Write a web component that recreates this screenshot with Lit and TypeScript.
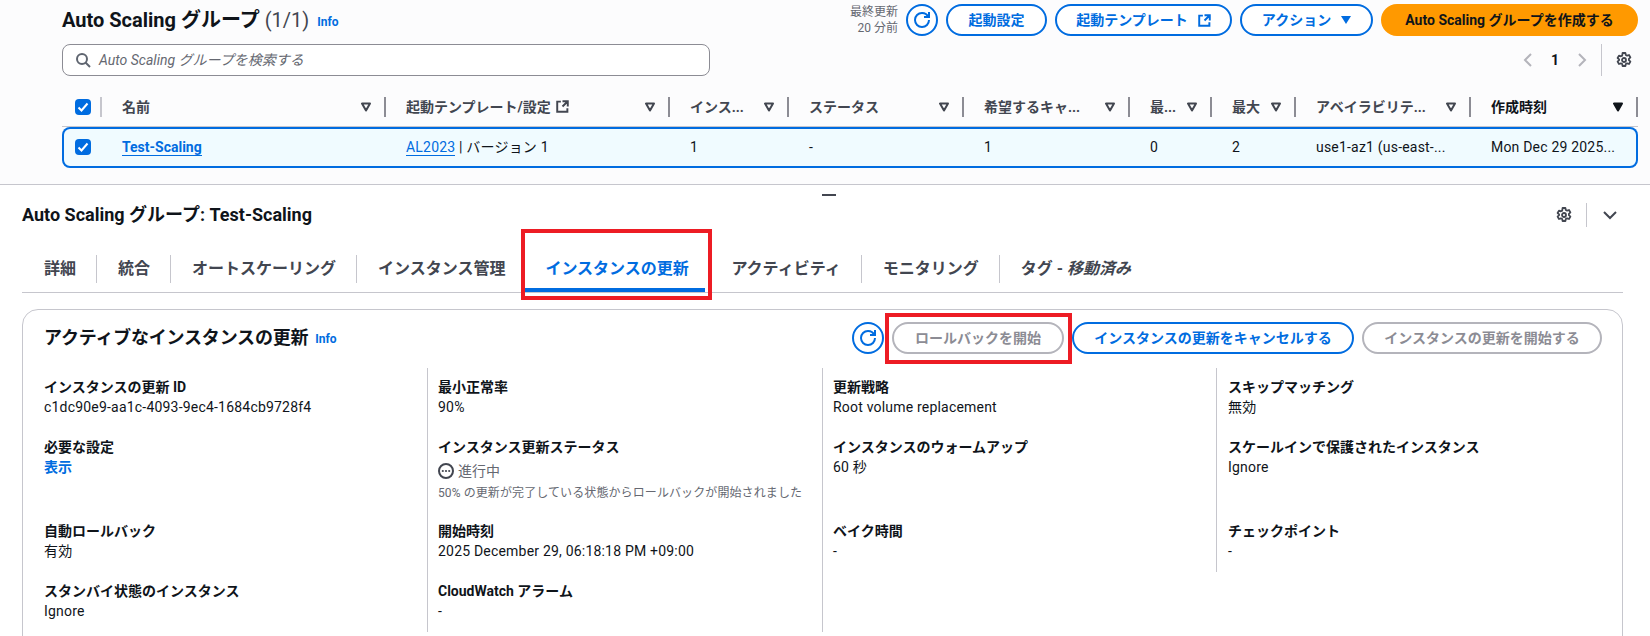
import { LitElement, html, css, svg } from "lit";
import { customElement } from "lit/decorators.js";

const icon = (body: unknown, size = 16, sw = 2) => html`<svg class="ic" width=${size} height=${size} viewBox="0 0 16 16" fill="none" stroke="currentColor" stroke-width=${sw}>${body}</svg>`;
const refresh = () => icon(svg`<path d="M10 5h5V0"/><path d="M15 8a6.96 6.96 0 0 1-7 7 6.96 6.96 0 0 1-7-7 6.96 6.96 0 0 1 7-7 6.87 6.87 0 0 1 6.3 4"/>`);
const external = () => icon(svg`<path d="M14.5 8V1.5H8M14.5 1.5 8 8M6 2H1.5v12.5h12.5V10"/>`, 13, 2.4);
const gear = () => icon(svg`<path d="M6.6 1h2.8l.4 2 1.3.7 1.9-.7 1.4 2.4-1.5 1.4v1.4l1.5 1.4-1.4 2.4-1.9-.7-1.3.7-.4 2H6.6l-.4-2-1.3-.7-1.9.7-1.4-2.4 1.5-1.4V7.4L1.6 6l1.4-2.4 1.9.7 1.3-.7z" stroke-linejoin="round"/><circle cx="8" cy="8" r="2"/>`, 16, 1.8);
const sort = (filled = false) => html`<svg class="sort" width="10" height="10" viewBox="0 0 10 10"><path d="M1 1.5h8L5 8.5z" fill=${filled ? "currentColor" : "none"} stroke="currentColor" stroke-width="2" stroke-linejoin="round"/></svg>`;
const check = () => html`<span class="cb"><svg width="16" height="16" viewBox="0 0 16 16"><path d="M3.5 8.5 6.5 11.5 12.5 4.5" fill="none" stroke="#fff" stroke-width="2"/></svg></span>`;

const COLS = [
  { label: "名前", value: "" },
  { label: "起動テンプレート/設定", value: "", ext: true },
  { label: "インス...", value: "1" },
  { label: "ステータス", value: "-" },
  { label: "希望するキャ...", value: "1" },
  { label: "最...", value: "0" },
  { label: "最大", value: "2" },
  { label: "アベイラビリテ...", value: "use1-az1 (us-east-..." },
  { label: "作成時刻", value: "Mon Dec 29 2025...", active: true },
];

type Item = { label: string; value?: string; link?: boolean; tall?: boolean; status?: boolean };
const DETAILS: Item[][] = [
  [
    { label: "インスタンスの更新 ID", value: "c1dc90e9-aa1c-4093-9ec4-1684cb9728f4" },
    { label: "必要な設定", value: "表示", link: true, tall: true },
    { label: "自動ロールバック", value: "有効" },
    { label: "スタンバイ状態のインスタンス", value: "Ignore" },
  ],
  [
    { label: "最小正常率", value: "90%" },
    { label: "インスタンス更新ステータス", status: true, tall: true },
    { label: "開始時刻", value: "2025 December 29, 06:18:18 PM +09:00" },
    { label: "CloudWatch アラーム", value: "-" },
  ],
  [
    { label: "更新戦略", value: "Root volume replacement" },
    { label: "インスタンスのウォームアップ", value: "60 秒", tall: true },
    { label: "ベイク時間", value: "-" },
  ],
  [
    { label: "スキップマッチング", value: "無効" },
    { label: "スケールインで保護されたインスタンス", value: "Ignore", tall: true },
    { label: "チェックポイント", value: "-" },
  ],
];

@customElement("app-root")
export class AppRoot extends LitElement {
  static styles = css`
    :host {
      display: block;
      height: 636px;
      overflow: hidden;
      position: relative;
      background: #fff;
      color: #0f141a;
      font: 14px/20px Roboto, "Noto Sans CJK JP", sans-serif;
    }
    .ic { display: block; flex: none; }
    .top {
      height: 185px;
      box-sizing: border-box;
      background: #fcfcfd;
      border-bottom: 1px solid #c6c6cd;
      padding: 4px 12px 0 62px;
    }
    .head { display: flex; justify-content: space-between; height: 32px; }
    .title { display: flex; align-items: center; gap: 8px; height: 32px; }
    h1 { margin: 0; font-size: 20px; line-height: 24px; font-weight: 700; }
    h1 span { font-weight: 400; color: #424650; }
    .info { font-size: 12px; font-weight: 700; color: #006ce0; line-height: 16px; margin-top: 3px; }
    .actions { display: flex; align-items: center; gap: 8px; }
    .stamp { font-size: 12px; line-height: 16px; color: #656871; text-align: right; }
    .btn {
      box-sizing: border-box;
      height: 32px;
      display: flex;
      align-items: center;
      justify-content: center;
      gap: 10px;
      border: 2px solid #006ce0;
      border-radius: 20px;
      color: #006ce0;
      font-weight: 700;
      background: #fff;
      white-space: nowrap;
    }
    .btn.round { width: 32px; border-radius: 50%; }
    .btn.dis { color: #8c8c94; border-color: #b4b4bb; }
    .btn.primary { background: #ff9900; border-color: #ff9900; color: #0f141a; }
    .w-a { width: 101px; } .w-b { width: 177px; } .w-c { width: 133px; } .w-d { width: 257px; }
    .w-e { width: 172px; } .w-f { width: 282px; } .w-g { width: 240px; }
    .tri { width: 0; height: 0; border: 5.5px solid transparent; border-top: 8px solid currentColor; border-bottom: 0; }
    .bar2 { display: flex; justify-content: space-between; margin-top: 8px; height: 32px; }
    .search {
      box-sizing: border-box;
      width: 648px;
      height: 32px;
      display: flex;
      align-items: center;
      gap: 8px;
      padding: 0 12px;
      background: #fff;
      border: 1px solid #8c8c94;
      border-radius: 8px;
      color: #656871;
      font-style: italic;
    }
    .search .ic { color: #5f6570; }
    .pager { display: flex; align-items: center; color: #b4b4bb; padding-right: 6px; }
    .pager b { color: #0f141a; width: 38px; text-align: center; }
    .pager .sep { width: 1px; height: 32px; background: #c6c6cd; margin: 0 14px 0 11px; }
    .pager .gear { color: #424650; }
    .grid { display: grid; grid-template-columns: 40px 284px 284px 119px 175px 166px 82px 84px 175px 167px; width: 1576px; }
    .thead { margin-top: 13px; height: 38px; padding-bottom: 2px; border-bottom: 1px solid #c6c6cd; box-sizing: border-box; font-weight: 700; color: #424650; }
    .th { display: flex; align-items: center; padding-left: 20px; min-width: 0; white-space: nowrap; }
    .th .sort { margin-left: auto; margin-right: 13px; }
    .th .ic { margin-left: 5px; }
    .th .lbl { display: flex; align-items: center; }
    .th::after { content: ""; width: 2px; height: 20px; background: #8c8c94; flex: none; }
    .th.on { color: #0f141a; }
    .th.cbc { padding-left: 13px; }
    .th.cbc::after { margin-left: auto; background: #c6c6cd; }
    .cb { display: block; width: 16px; height: 16px; background: #006ce0; border-radius: 4px; }
    .cb svg { display: block; }
    .row { height: 41px; padding-bottom: 1px; box-sizing: border-box; background: #f0fbff; box-shadow: inset 0 0 0 2px #006ce0; border-radius: 8px; align-items: center; }
    .td { padding-left: 20px; white-space: nowrap; letter-spacing: 0.2px; }
    .td.cbc { padding-left: 13px; }
    a { color: #006ce0; text-decoration: none; border-bottom: 1px solid #006ce0; }
    a.b { font-weight: 700; letter-spacing: 0; }
    .bottom { position: relative; padding: 0 0 0 22px; }
    .handle { display: flex; justify-content: center; align-items: center; height: 18px; padding: 0 25px 0 10px; }
    .handle i { width: 14px; height: 2px; background: #424650; margin-top: 2px; }
    .panel-head { display: flex; justify-content: space-between; align-items: center; height: 24px; padding-right: 32px; }
    h2 { margin: 0; font-size: 18px; line-height: 24px; font-weight: 700; }
    .tools { display: flex; align-items: center; color: #424650; }
    .tools .sep { width: 1px; height: 24px; background: #c6c6cd; margin: 0 15px 0 14px; }
    .tabs { display: flex; height: 38px; margin: 28px 27px 0 0; box-sizing: border-box; border-bottom: 1px solid #c6c6cd; font-weight: 700; font-size: 16px; color: #424650; }
    .tab { height: 28px; line-height: 28px; padding: 0 20px 0 21px; border-right: 1px solid #c6c6cd; white-space: nowrap; position: relative; }
    .tab:first-child { padding-left: 22px; }
    .tab.plain { border-right: 0; }
    .tab.active { color: #006ce0; padding: 0 20px; width: 180px; box-sizing: border-box; }
    .tab.active::before { content: ""; position: absolute; left: 0; right: 0; bottom: -9px; height: 4px; background: #006ce0; }
    .tab.after-active { padding-left: 26px; }
    .tab em { font-style: italic; }
    .mark { position: absolute; border: 4px solid #ed1c24; box-sizing: border-box; pointer-events: none; }
    .mark.m1 { left: 521px; top: 229px; width: 191px; height: 71px; }
    .mark.m2 { left: 885px; top: 313px; width: 187px; height: 51px; }
    .card { margin: 16px 27px 0 0; border: 1px solid #c6c6cd; border-radius: 16px; padding: 12px 20px 0 21px; height: 400px; box-sizing: border-box; }
    .card-head { display: flex; justify-content: space-between; align-items: center; height: 32px; }
    .card-title { display: flex; align-items: center; gap: 7px; }
    .card-title h2 { letter-spacing: -0.2px; }
    .card-title .info { margin-top: 2px; }
    .card-actions { display: flex; gap: 8px; }
    .cols { display: grid; grid-template-columns: 384px 395px 394px 1fr; margin-top: 14px; align-items: start; }
    .col { display: flex; flex-direction: column; gap: 20px; padding: 9px 0 11px 10px; border-right: 1px solid #c6c6cd; }
    .col:first-child { padding-left: 0; }
    .col:last-child { border-right: 0; padding-left: 11px; }
    .item { min-height: 40px; }
    .item.tall { min-height: 64px; }
    .k { font-weight: 700; }
    .v { letter-spacing: 0.2px; }
    .v.link { color: #006ce0; font-weight: 700; letter-spacing: 0; }
    .status { display: flex; align-items: center; gap: 4px; color: #656871; margin-top: 4px; }
    .status .ic { color: #424650; }
    .desc { font-size: 12px; line-height: 16px; color: #656871; margin-top: 4px; white-space: nowrap; letter-spacing: 0.1px; }
  `;

  render() {
    return html`
      <section class="top">
        <div class="head">
          <div class="title"><h1>Auto Scaling グループ <span>(1/1)</span></h1><span class="info">Info</span></div>
          <div class="actions">
            <div class="stamp">最終更新<br />20 分前</div>
            <div class="btn round">${refresh()}</div>
            <div class="btn w-a">起動設定</div>
            <div class="btn w-b">起動テンプレート ${external()}</div>
            <div class="btn w-c">アクション <span class="tri"></span></div>
            <div class="btn primary w-d">Auto Scaling グループを作成する</div>
          </div>
        </div>
        <div class="bar2">
          <div class="search">${icon(svg`<circle cx="7" cy="7" r="5"/><path d="m15 15-4.5-4.5"/>`)}Auto Scaling グループを検索する</div>
          <div class="pager">
            ${icon(svg`<path d="M11 2 5 8l6 6"/>`)}<b>1</b>${icon(svg`<path d="m5 2 6 6-6 6"/>`)}
            <span class="sep"></span><span class="gear">${gear()}</span>
          </div>
        </div>
        <div class="grid thead">
          <div class="th cbc">${check()}</div>
          ${COLS.map(
            (c) => html`<div class="th ${c.active ? "on" : ""}"><span class="lbl">${c.label}${c.ext ? external() : ""}</span>${sort(!!c.active)}</div>`
          )}
        </div>
        <div class="grid row">
          <div class="td cbc">${check()}</div>
          <div class="td"><a class="b">Test-Scaling</a></div>
          <div class="td"><a>AL2023</a> | バージョン 1</div>
          ${COLS.slice(2).map((c) => html`<div class="td">${c.value}</div>`)}
        </div>
      </section>
      <section class="bottom">
        <div class="handle"><i></i></div>
        <div class="panel-head">
          <h2>Auto Scaling グループ: Test-Scaling</h2>
          <div class="tools">${gear()}<span class="sep"></span>${icon(svg`<path d="m2 5 6 6 6-6"/>`)}</div>
        </div>
        <div class="tabs">
          <div class="tab">詳細</div>
          <div class="tab">統合</div>
          <div class="tab">オートスケーリング</div>
          <div class="tab plain">インスタンス管理</div>
          <div class="tab active plain">インスタンスの更新</div>
          <div class="tab after-active">アクティビティ</div>
          <div class="tab">モニタリング</div>
          <div class="tab plain">タグ - <em>移動済み</em></div>
        </div>
        <div class="card">
          <div class="card-head">
            <div class="card-title"><h2>アクティブなインスタンスの更新</h2><span class="info">Info</span></div>
            <div class="card-actions">
              <div class="btn round">${refresh()}</div>
              <div class="btn dis w-e">ロールバックを開始</div>
              <div class="btn w-f">インスタンスの更新をキャンセルする</div>
              <div class="btn dis w-g">インスタンスの更新を開始する</div>
            </div>
          </div>
          <div class="cols">
            ${DETAILS.map(
              (col) => html`<div class="col">
                ${col.map(
                  (it) => html`<div class="item ${it.tall ? "tall" : ""}">
                    <div class="k">${it.label}</div>
                    ${it.status
                      ? html`<div class="status">${icon(svg`<circle cx="8" cy="8" r="7"/><g fill="currentColor" stroke="none"><circle cx="4.8" cy="8" r="1.1"/><circle cx="8" cy="8" r="1.1"/><circle cx="11.2" cy="8" r="1.1"/></g>`)}進行中</div>
                          <div class="desc">50% の更新が完了している状態からロールバックが開始されました</div>`
                      : html`<div class="v ${it.link ? "link" : ""}">${it.value}</div>`}
                  </div>`
                )}
              </div>`
            )}
          </div>
        </div>
      </section>
      <div class="mark m1"></div>
      <div class="mark m2"></div>
    `;
  }
}
